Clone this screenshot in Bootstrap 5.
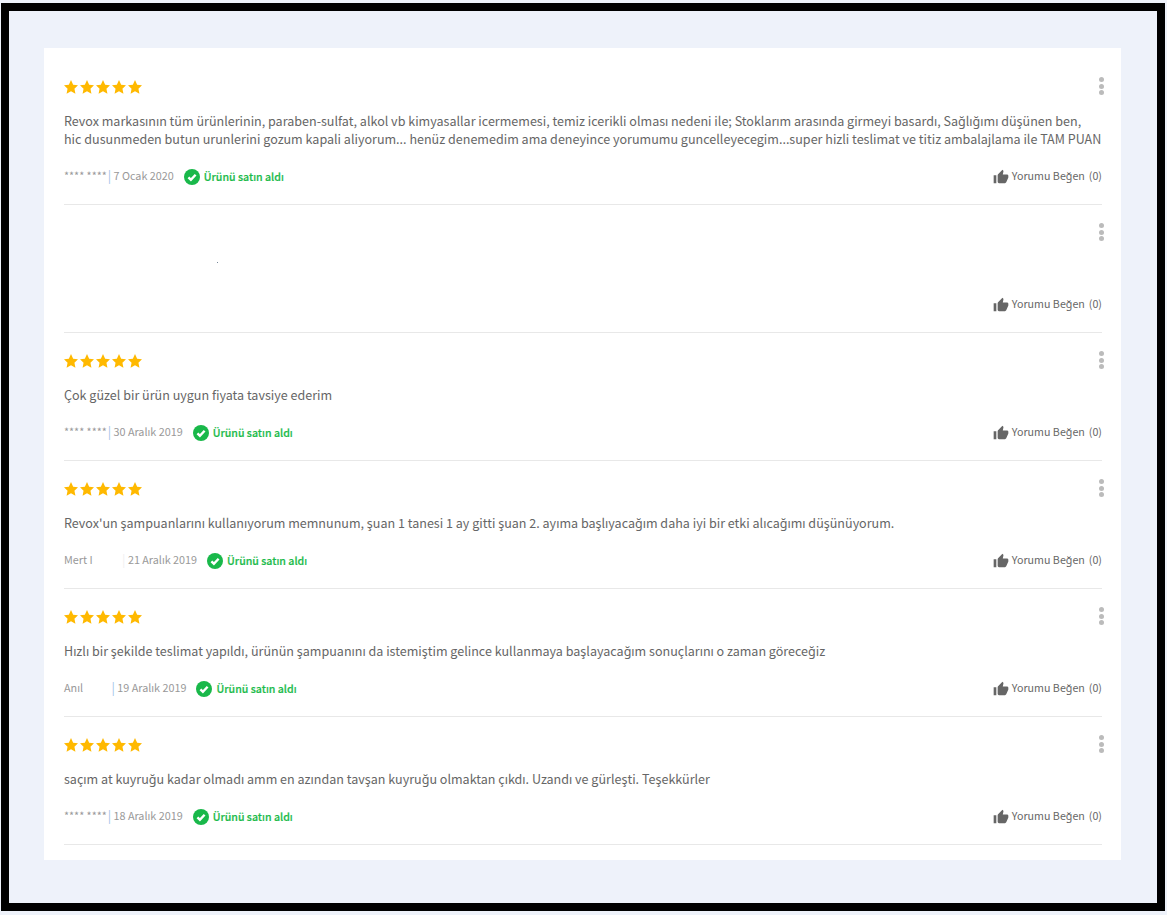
<!DOCTYPE html>
<html lang="tr">
<head>
<meta charset="utf-8">
<title>Yorumlar</title>
<link href="https://cdn.jsdelivr.net/npm/bootstrap@5.3.0/dist/css/bootstrap.min.css" rel="stylesheet">
<style>
html,body{height:915px;overflow:hidden}
body{background:#eef2fa;padding:3px 2px 4px 1px;font-family:"Noto Sans CJK SC","Noto Sans",sans-serif;color:#666}
.frame{border:8px solid #000;background:#eef2fa;height:908px;padding:37px 36px 0 35px}
.sheet{background:#fff;height:812px;padding:11px 19px 0 20px}
.review{height:128px;border-bottom:1px solid #e8e8e8}
.review.first{height:146px}
.rv-top{height:53px}
.rv-stars{gap:2px;padding-top:21px}
.rv-stars svg{width:14px;height:14px;fill:#ffb900;display:block}
.rv-dots{gap:1.7px;margin-right:-2px;padding-top:18px}
.rv-dots i{display:block;width:5px;height:5px;border-radius:50%;background:#bbb}
.rv-text{font-size:12.56px;line-height:18px;color:#666;height:36px;margin:0;white-space:nowrap}
.short .rv-text{height:18px}
.rv-meta{font-size:10.8px;color:#999;height:20px}
.rv-who{margin-bottom:2px}
.rv-sep{color:#9fc2e8;font-size:12.5px;line-height:1;margin:0 0 0 -1.5px}
.rv-faint{color:#f0f0f0;font-size:12.5px;line-height:1;margin:0 0 0 -1.5px}
.rv-bought{color:#1cbb4b;font-weight:500;font-size:10.6px;margin-left:10px;margin-top:2px;-webkit-text-stroke:.2px #1cbb4b}
.rv-bought svg{width:16px;height:16px;margin-right:4px}
.rv-like{font-size:10.7px;color:#666;height:20px}
.rv-like svg{width:16px;height:15px;fill:#666;margin-right:3px}
.rv-like b{font-weight:400;margin-left:4px}
.blank-a{width:30px;display:inline-block}
.blank-b{width:31px;display:inline-block}
.rv-fleck{width:1px;height:1px;background:#789;margin:57px 0 0 153px}
.gap-a,.gap-b{height:18px}
</style>
</head>
<body>
<svg width="0" height="0" class="d-block position-absolute">
<defs>
<path id="star" d="M6.500 0l2 4.300 4.500.6-3.300 3.200.9 4.700-4.100-2.300-4.100 2.300.9-4.700L0 4.900l4.500-.6z"/>
<path id="thumb" d="M1 21h4V9H1v12zm22-11c0-1.100-.9-2-2-2h-6.310l.95-4.570.03-.32c0-.41-.17-.79-.44-1.060L14.170 1 7.590 7.590C7.220 7.950 7 8.450 7 9v10c0 1.100.9 2 2 2h9c.83 0 1.540-.5 1.840-1.220l3.020-7.050c.09-.23.14-.47.14-.73v-2z"/>
<g id="check"><circle cx="8" cy="8" r="8" fill="#19b84a"/><path d="M4.400 8.300l2.500 2.400 4.700-5" fill="none" stroke="#fff" stroke-width="2.400"/></g>
</defs>
</svg>
<div class="frame">
<div class="sheet">

<div class="review first">
<div class="rv-top d-flex justify-content-between"><div class="rv-stars d-flex"><svg viewBox="0 0 13 13"><use href="#star"/></svg><svg viewBox="0 0 13 13"><use href="#star"/></svg><svg viewBox="0 0 13 13"><use href="#star"/></svg><svg viewBox="0 0 13 13"><use href="#star"/></svg><svg viewBox="0 0 13 13"><use href="#star"/></svg></div><div class="rv-dots d-flex flex-column"><i></i><i></i><i></i></div></div>
<p class="rv-text">Revox markasının tüm ürünlerinin, paraben-sulfat, alkol vb kimyasallar icermemesi, temiz icerikli olması nedeni ile; Stoklarım arasında girmeyi basardı, Sağlığımı düşünen ben,<br>hic dusunmeden butun urunlerini gozum kapali aliyorum... henüz denemedim ama deneyince yorumumu guncelleyecegim...super hizli teslimat ve titiz ambalajlama ile TAM PUAN</p>
<div class="gap-a"></div>
<div class="d-flex justify-content-between align-items-center"><div class="rv-meta d-flex align-items-center"><span class="rv-who">**** **** <span class="rv-sep">|</span> 7 Ocak 2020</span><span class="rv-bought d-flex align-items-center"><svg viewBox="0 0 16 16"><use href="#check"/></svg>Ürünü satın aldı</span></div><div class="rv-like d-flex align-items-center"><svg viewBox="0 0 24 22"><use href="#thumb"/></svg>Yorumu Beğen<b>(0)</b></div></div>
</div>

<div class="review short">
<div class="rv-top d-flex justify-content-between"><div><div class="rv-fleck"></div></div><div class="rv-dots d-flex flex-column"><i></i><i></i><i></i></div></div>
<p class="rv-text"></p>
<div class="gap-b"></div>
<div class="d-flex justify-content-end align-items-center"><div class="rv-like d-flex align-items-center"><svg viewBox="0 0 24 22"><use href="#thumb"/></svg>Yorumu Beğen<b>(0)</b></div></div>
</div>

<div class="review short">
<div class="rv-top d-flex justify-content-between"><div class="rv-stars d-flex"><svg viewBox="0 0 13 13"><use href="#star"/></svg><svg viewBox="0 0 13 13"><use href="#star"/></svg><svg viewBox="0 0 13 13"><use href="#star"/></svg><svg viewBox="0 0 13 13"><use href="#star"/></svg><svg viewBox="0 0 13 13"><use href="#star"/></svg></div><div class="rv-dots d-flex flex-column"><i></i><i></i><i></i></div></div>
<p class="rv-text">Çok güzel bir ürün uygun fiyata tavsiye ederim</p>
<div class="gap-b"></div>
<div class="d-flex justify-content-between align-items-center"><div class="rv-meta d-flex align-items-center"><span class="rv-who">**** **** <span class="rv-sep">|</span> 30 Aralık 2019</span><span class="rv-bought d-flex align-items-center"><svg viewBox="0 0 16 16"><use href="#check"/></svg>Ürünü satın aldı</span></div><div class="rv-like d-flex align-items-center"><svg viewBox="0 0 24 22"><use href="#thumb"/></svg>Yorumu Beğen<b>(0)</b></div></div>
</div>

<div class="review short">
<div class="rv-top d-flex justify-content-between"><div class="rv-stars d-flex"><svg viewBox="0 0 13 13"><use href="#star"/></svg><svg viewBox="0 0 13 13"><use href="#star"/></svg><svg viewBox="0 0 13 13"><use href="#star"/></svg><svg viewBox="0 0 13 13"><use href="#star"/></svg><svg viewBox="0 0 13 13"><use href="#star"/></svg></div><div class="rv-dots d-flex flex-column"><i></i><i></i><i></i></div></div>
<p class="rv-text">Revox'un şampuanlarını kullanıyorum memnunum, şuan 1 tanesi 1 ay gitti şuan 2. ayıma başlıyacağım daha iyi bir etki alıcağımı düşünüyorum.</p>
<div class="gap-b"></div>
<div class="d-flex justify-content-between align-items-center"><div class="rv-meta d-flex align-items-center"><span class="rv-who">Mert I<span class="blank-b"></span><span class="rv-faint">|</span> 21 Aralık 2019</span><span class="rv-bought d-flex align-items-center"><svg viewBox="0 0 16 16"><use href="#check"/></svg>Ürünü satın aldı</span></div><div class="rv-like d-flex align-items-center"><svg viewBox="0 0 24 22"><use href="#thumb"/></svg>Yorumu Beğen<b>(0)</b></div></div>
</div>

<div class="review short">
<div class="rv-top d-flex justify-content-between"><div class="rv-stars d-flex"><svg viewBox="0 0 13 13"><use href="#star"/></svg><svg viewBox="0 0 13 13"><use href="#star"/></svg><svg viewBox="0 0 13 13"><use href="#star"/></svg><svg viewBox="0 0 13 13"><use href="#star"/></svg><svg viewBox="0 0 13 13"><use href="#star"/></svg></div><div class="rv-dots d-flex flex-column"><i></i><i></i><i></i></div></div>
<p class="rv-text">Hızlı bir şekilde teslimat yapıldı, ürünün şampuanını da istemiştim gelince kullanmaya başlayacağım sonuçlarını o zaman göreceğiz</p>
<div class="gap-b"></div>
<div class="d-flex justify-content-between align-items-center"><div class="rv-meta d-flex align-items-center"><span class="rv-who">Anıl<span class="blank-a"></span><span class="rv-sep">|</span> 19 Aralık 2019</span><span class="rv-bought d-flex align-items-center"><svg viewBox="0 0 16 16"><use href="#check"/></svg>Ürünü satın aldı</span></div><div class="rv-like d-flex align-items-center"><svg viewBox="0 0 24 22"><use href="#thumb"/></svg>Yorumu Beğen<b>(0)</b></div></div>
</div>

<div class="review short">
<div class="rv-top d-flex justify-content-between"><div class="rv-stars d-flex"><svg viewBox="0 0 13 13"><use href="#star"/></svg><svg viewBox="0 0 13 13"><use href="#star"/></svg><svg viewBox="0 0 13 13"><use href="#star"/></svg><svg viewBox="0 0 13 13"><use href="#star"/></svg><svg viewBox="0 0 13 13"><use href="#star"/></svg></div><div class="rv-dots d-flex flex-column"><i></i><i></i><i></i></div></div>
<p class="rv-text">saçım at kuyruğu kadar olmadı amm en azından tavşan kuyruğu olmaktan çıkdı. Uzandı ve gürleşti. Teşekkürler</p>
<div class="gap-b"></div>
<div class="d-flex justify-content-between align-items-center"><div class="rv-meta d-flex align-items-center"><span class="rv-who">**** **** <span class="rv-sep">|</span> 18 Aralık 2019</span><span class="rv-bought d-flex align-items-center"><svg viewBox="0 0 16 16"><use href="#check"/></svg>Ürünü satın aldı</span></div><div class="rv-like d-flex align-items-center"><svg viewBox="0 0 24 22"><use href="#thumb"/></svg>Yorumu Beğen<b>(0)</b></div></div>
</div>

</div>
</div>
</body>
</html>
